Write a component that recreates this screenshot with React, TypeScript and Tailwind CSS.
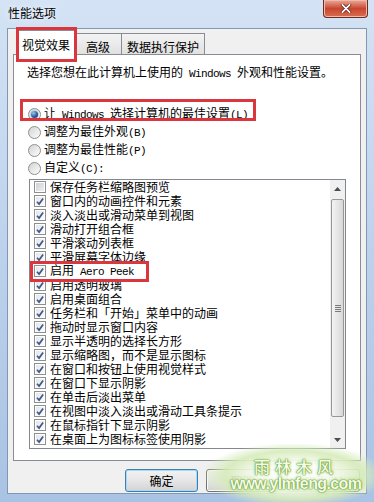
import React from 'react';

const items: [string, boolean][] = [
  ['保存任务栏缩略图预览', false],
  ['窗口内的动画控件和元素', true],
  ['淡入淡出或滑动菜单到视图', true],
  ['滑动打开组合框', true],
  ['平滑滚动列表框', true],
  ['平滑屏幕字体边缘', true],
  ['AERO', true],
  ['启用透明玻璃', true],
  ['启用桌面组合', true],
  ['任务栏和「开始」菜单中的动画', true],
  ['拖动时显示窗口内容', true],
  ['显示半透明的选择长方形', true],
  ['显示缩略图，而不是显示图标', true],
  ['在窗口和按钮上使用视觉样式', true],
  ['在窗口下显示阴影', true],
  ['在单击后淡出菜单', true],
  ['在视图中淡入淡出或滑动工具条提示', true],
  ['在鼠标指针下显示阴影', true],
  ['在桌面上为图标标签使用阴影', true],
];

const Latin: React.FC<{ children: React.ReactNode }> = ({ children }) => (
  <span className="font-['Liberation_Mono',monospace] text-[11px] tracking-[-0.6px] whitespace-pre">{children}</span>
);

const Radio: React.FC<{ checked?: boolean }> = ({ checked }) => (
  <span className="flex h-[13px] w-[13px] shrink-0 items-center justify-center rounded-full border border-[#8e8f8f] bg-gradient-to-br from-[#d2d3d5] to-[#fdfdfd]">
    {checked && (
      <span className="h-[7px] w-[7px] rounded-full bg-[radial-gradient(circle_at_35%_30%,#9cc8ee,#2a5b96_55%,#0f2c57)] ring-1 ring-[#bcd4ec]" />
    )}
  </span>
);

const Check: React.FC<{ checked: boolean }> = ({ checked }) => (
  <span className="flex h-[12px] w-[12px] shrink-0 border border-[#8e8f8f] bg-white p-px">
    <span
      className={
        checked
          ? 'flex h-full w-full items-center justify-center bg-gradient-to-br from-[#e4e7ea] to-[#fbfbfb]'
          : 'flex h-full w-full items-center justify-center bg-gradient-to-br from-[#cfd1d4] to-[#efefef]'
      }
    >
      {checked && (
        <svg viewBox="0 0 8 8" className="h-[9px] w-[9px]">
          <path d="M1 4.3 L3.1 6.6 L7.1 1.1" fill="none" stroke="#40578a" strokeWidth="1.7" />
        </svg>
      )}
    </span>
  </span>
);

const Button: React.FC<{ label: string; primary?: boolean }> = ({ label, primary }) => (
  <button
    className={
      primary
        ? 'h-[23px] w-[73px] rounded-[3px] border border-[#3c7fb1] bg-gradient-to-b from-[#f2f2f2] via-[#e6e6e6] to-[#d3d3d3] text-[12px] leading-[14px] text-black shadow-[inset_0_0_0_1px_#a9d8f5]'
        : 'h-[23px] w-[73px] rounded-[3px] border border-[#707070] bg-gradient-to-b from-[#f2f2f2] via-[#e6e6e6] to-[#d3d3d3] text-[12px] leading-[14px] text-black shadow-[inset_0_0_0_1px_#fbfbfb]'
    }
  >
    {label}
  </button>
);

const App: React.FC = () => {
  return (
    <div className="relative flex h-[502px] w-[374px] flex-col overflow-hidden bg-gradient-to-b from-[#d4e3f5] via-[#bcd2ec] to-[#a9c3e4] font-['Noto_Sans_CJK_SC',sans-serif] text-[12px] leading-[14px] text-black">
      {/* Title bar */}
      <div className="flex h-[28px] shrink-0 items-start justify-between">
        <span className="pl-[8px] pt-[6px] [text-shadow:0_0_6px_#ffffff]">性能选项</span>
        <div className="mr-[6px] flex h-[18px] w-[45px] items-center justify-center rounded-b-[4px] border border-t-0 border-[#6d2a20] bg-gradient-to-b from-[#e9a99a] via-[#c8452f] to-[#d86d50] shadow-[inset_0_0_0_1px_#f0b9a8]">
          <svg viewBox="0 0 12 10" className="h-[9px] w-[12px]">
            <path d="M2 1 L10 9 M10 1 L2 9" stroke="#5a1d14" strokeWidth="3.6" strokeLinecap="round" />
            <path d="M2 1 L10 9 M10 1 L2 9" stroke="#ffffff" strokeWidth="2" strokeLinecap="round" />
          </svg>
        </div>
      </div>

      {/* Client area */}
      <div className="mx-[7px] flex h-[466px] flex-col border border-[#8397b3] bg-[#f0f0f0]">
        {/* Tabs */}
        <div className="flex h-[25px] shrink-0 items-end pl-[9px]">
          <div className="relative z-10 -mb-px flex h-[25px] w-[58px] items-end justify-center border border-b-0 border-[#898c95] bg-white pb-[3px]">
            视觉效果
            <span className="pointer-events-none absolute -left-[2px] -top-[4px] h-[35px] w-[61px] border-[3px] border-[#d9363e]" />
          </div>
          <div className="flex h-[21px] w-[47px] items-end justify-center border border-b-0 border-l-0 border-[#898c95] bg-gradient-to-b from-[#f3f3f3] to-[#e1e1e1]">
            高级
          </div>
          <div className="flex h-[21px] w-[83px] items-end justify-center border border-b-0 border-l-0 border-[#898c95] bg-gradient-to-b from-[#f3f3f3] to-[#e1e1e1]">
            数据执行保护
          </div>
        </div>

        {/* Panel */}
        <div className="ml-[5px] flex h-[407px] w-[348px] shrink-0 flex-col border border-[#898c95] bg-white">
          <p className="pl-[13px] pt-[10px]">
            选择您想在此计算机上使用的<Latin> Windows </Latin>外观和性能设置。
          </p>

          <div className="mt-[24px] flex flex-col">
            <div className="relative flex h-[18px] items-center gap-[3px] pl-[14px]">
              <Radio checked />
              <span>
                让<Latin> Windows </Latin>选择计算机的最佳设置<Latin>(L)</Latin>
              </span>
              <span className="pointer-events-none absolute left-[6px] -top-[6px] h-[22px] w-[236px] border-[3px] border-[#d9363e]" />
            </div>
            <div className="flex h-[18px] items-center gap-[3px] pl-[14px]">
              <Radio />
              <span>
                调整为最佳外观<Latin>(B)</Latin>
              </span>
            </div>
            <div className="flex h-[18px] items-center gap-[3px] pl-[14px]">
              <Radio />
              <span>
                调整为最佳性能<Latin>(P)</Latin>
              </span>
            </div>
            <div className="flex h-[18px] items-center gap-[3px] pl-[14px]">
              <Radio />
              <span>
                自定义<Latin>(C):</Latin>
              </span>
            </div>
          </div>

          {/* List box */}
          <div className="ml-[15px] mt-[2px] flex h-[270px] w-[317px] border border-[#828790] bg-white">
            <div className="flex flex-1 flex-col">
              {items.map(([label, checked], i) =>
                label === 'AERO' ? (
                  <div key={i} className="relative flex h-[14px] items-center gap-[4px] pl-[4px]">
                    <Check checked={checked} />
                    <span>
                      启用<Latin> Aero Peek</Latin>
                    </span>
                    <span className="pointer-events-none absolute left-0 -top-[3px] h-[21px] w-[119px] border-[3px] border-[#d9363e]" />
                  </div>
                ) : (
                  <div key={i} className="flex h-[14px] items-center gap-[4px] pl-[4px]">
                    <Check checked={checked} />
                    <span className="whitespace-nowrap">{label}</span>
                  </div>
                )
              )}
            </div>

            {/* Scrollbar */}
            <div className="flex w-[15px] flex-col bg-[#f0f0f0]">
              <div className="flex h-[18px] items-center justify-center">
                <svg viewBox="0 0 7 4" className="h-[4px] w-[7px]">
                  <path d="M0 4 L3.5 0 L7 4 Z" fill="#4d4d4d" />
                </svg>
              </div>
              <div className="mx-px mt-px flex h-[218px] items-center justify-center rounded-[2px] border border-[#979797] bg-gradient-to-r from-[#f4f4f4] to-[#d8d8d8]">
                <div className="flex w-[6px] flex-col gap-px">
                  <span className="h-px bg-[#7a7a7a]" />
                  <span className="h-px bg-[#7a7a7a]" />
                  <span className="h-px bg-[#7a7a7a]" />
                  <span className="h-px bg-[#7a7a7a]" />
                </div>
              </div>
              <div className="flex-1" />
              <div className="flex h-[17px] items-center justify-center">
                <svg viewBox="0 0 7 4" className="h-[4px] w-[7px]">
                  <path d="M0 0 L3.5 4 L7 0 Z" fill="#4d4d4d" />
                </svg>
              </div>
            </div>
          </div>
        </div>

        {/* Buttons */}
        <div className="mt-[8px] flex justify-end gap-[8px] pr-[6px]">
          <Button label="确定" primary />
          <Button label="取消" />
          <Button label="应用(A)" />
        </div>
      </div>

      {/* Watermark */}
      <div className="pointer-events-none absolute left-[206px] top-[444px] flex h-[62px] w-[176px] flex-col items-center justify-center bg-[radial-gradient(ellipse_at_center,rgba(255,255,255,0.96)_25%,rgba(214,235,186,0.9)_55%,rgba(214,235,186,0)_74%)] pl-[4px]">
        <span className="text-[16px] font-medium leading-[18px] tracking-[5px] text-[#f4faec] [text-shadow:0_0_1px_#5e9a1f,0_0_1px_#5e9a1f,0_0_2px_#7bb43c,0_0_4px_#a6d174]">
          雨林木风
        </span>
        <span className="font-['Liberation_Sans',sans-serif] text-[16px] font-bold leading-[18px] tracking-[-0.6px] text-[#f4faec] [text-shadow:0_0_1px_#5a961c,0_0_1px_#5a961c,0_0_2px_#76b036,0_0_4px_#a6d174]">
          www.ylmfeng.com
        </span>
      </div>
    </div>
  );
};

export default App;
